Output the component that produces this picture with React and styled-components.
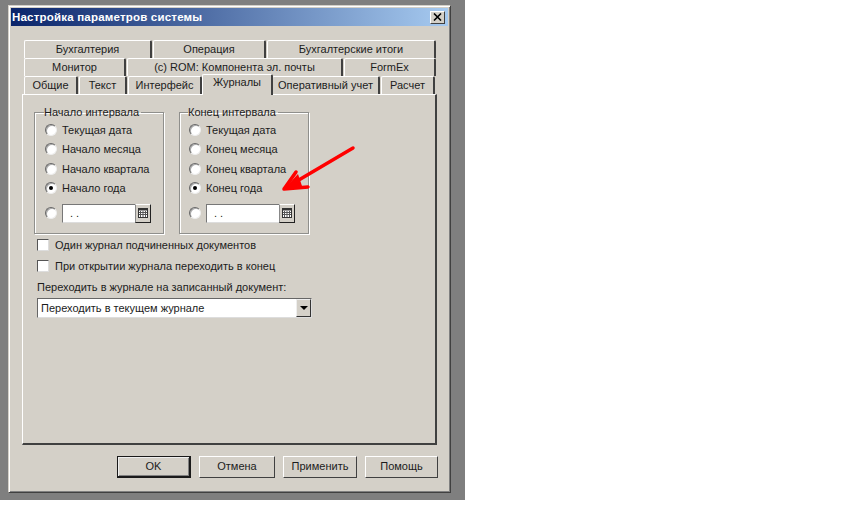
import React from "react";
import styled, { createGlobalStyle, css } from "styled-components";

const Global = createGlobalStyle`
  html, body { margin: 0; padding: 0; background: #fff; }
  body { font-family: "Liberation Sans", Arial, sans-serif; font-size: 11px; color: #1c1c1c; }
`;
const Backdrop = styled.div`
  position: relative; width: 465px; height: 500px; background: #7f7f7f;
  padding: 5px 14px 7px 8px; box-sizing: border-box;
`;
const Dialog = styled.div`
  width: 443px; height: 488px; box-sizing: border-box; background: #d4d0c8;
  border: 1px solid #404040; border-top-color: #d4d0c8; border-left-color: #d4d0c8;
  box-shadow: inset 1px 1px 0 #fff, inset -1px -1px 0 #808080;
  padding: 2px 2px 2px 2px; display: flex; flex-direction: column;
`;
const TitleBar = styled.div`
  height: 18px; flex: none; display: flex; align-items: center; justify-content: space-between;
  padding: 0 3px 0 1px; background: linear-gradient(90deg, #0a246a, #a6caf0);
`;
const Title = styled.div`
  color: #fff; font-weight: 700; font-size: 11.5px; letter-spacing: 0.2px;
`;
const CloseButton = styled.div`
  width: 15px; height: 13px; background: #d4d0c8; box-sizing: border-box;
  border: 1px solid; border-color: #fff #404040 #404040 #fff;
  display: flex; align-items: center; justify-content: center;
`;
const Tabs = styled.div`
  margin: 14px 0 0 11px; width: 415px; display: flex; flex-direction: column;
`;
const TabRow = styled.div`
  display: flex; height: 18px; padding-left: 2px; gap: 1px; align-items: flex-end;
  position: relative; z-index: ${p => p.$z || 0};
`;
const Tab = styled.div`
  box-sizing: border-box; height: 18px; width: ${p => p.$w}px; flex: none; background: #d4d0c8; text-align: center;
  border-top: 1px solid #fff; border-left: 1px solid #fff;
  border-right: 2px solid #404040; border-top-left-radius: 2px; border-top-right-radius: 2px;
  line-height: 16px; font-size: 11px; white-space: nowrap;
  ${p => p.$active && css`
    height: 21px; margin-left: -1px; margin-right: -2px; margin-bottom: -1px;
    line-height: 15px; position: relative; z-index: 2; padding-bottom: 3px;
  `}
`;
const Panel = styled.div`
  box-sizing: border-box; height: 351px; width: 415px; border: 1px solid #fff;
  border-right: 2px solid #404040; border-bottom: 2px solid #404040;
  padding: 12px 0 0 11px; position: relative;
`;
const Groups = styled.div`display: flex; gap: 15px;`;
const Group = styled.fieldset`
  margin: 0; box-sizing: border-box; width: 130px; height: 127px; padding: 3px 0 0 ${p => p.$pad}px;
  border: 1px solid #8f8f8c; box-shadow: 1px 1px 0 #fff, inset 1px 1px 0 #fff;
  display: flex; flex-direction: column; min-width: 0;
`;
const Legend = styled.legend`
  padding: 0 2px 0 0; margin-left: ${p => p.$offset}px; font-size: 11px; line-height: 10px;
`;
const RadioRow = styled.div`
  display: flex; align-items: center; height: 19.5px; gap: 5px; white-space: nowrap;
`;
const DateRow = styled.div`
  display: flex; align-items: center; height: 22px; margin-top: 4px; gap: 5px;
`;
const RadioDot = styled.span`
  width: 12px; height: 12px; flex: none; border-radius: 50%; box-sizing: border-box; background: #fff;
  border: 1px solid #666; border-right-color: #eee; border-bottom-color: #eee;
  box-shadow: inset 1px 1px 0 #aaa;
  display: flex; align-items: center; justify-content: center;
  &::after { content: ""; width: 4px; height: 4px; border-radius: 50%; background: ${p => (p.$on ? "#000" : "transparent")}; }
`;
const DateField = styled.div`
  width: 73px; height: 19px; box-sizing: border-box; background: #fff; border: 1px solid #777;
  border-right: 0; border-bottom-color: #ddd; padding-left: 7px; line-height: 16px; letter-spacing: 3px;
`;
const CalButton = styled.div`
  width: 16px; height: 19px; box-sizing: border-box; background: #d4d0c8; margin-left: -5px;
  border: 1px solid; border-color: #fff #222 #222 #888;
  display: flex; align-items: center; justify-content: center;
`;
const CheckRow = styled.div`
  display: flex; align-items: center; height: 21px; gap: 6px;
`;
const CheckBox = styled.span`
  width: 12px; height: 12px; box-sizing: border-box; background: #fff; flex: none; margin-left: 3px;
  border: 1px solid #555; border-right-color: #ddd; border-bottom-color: #ddd;
`;
const Checks = styled.div`margin-top: 0;`;
const ComboLabel = styled.div`margin: 4px 0 0 3px; height: 18px; line-height: 14px;`;
const Combo = styled.div`
  margin: 0 0 0 3px; width: 275px; height: 20px; box-sizing: border-box; background: #fff; display: flex;
  justify-content: space-between; border: 1px solid #666; border-right-color: #ddd; border-bottom-color: #ddd;
  padding-left: 3px; line-height: 18px;
`;
const ComboArrow = styled.div`
  width: 15px; background: #d4d0c8; box-sizing: border-box; border: 1px solid; border-color: #eee #333 #333 #eee;
  display: flex; align-items: center; justify-content: center;
  &::after { content: ""; border: 4px solid transparent; border-top: 4px solid #000; border-bottom: 0; }
`;
const Footer = styled.div`
  display: flex; gap: 8px; justify-content: flex-end; width: 416px; margin: 11px 0 0 11px;
`;
const Button = styled.div`
  height: 22px; box-sizing: border-box; width: ${p => p.$w}px; background: #d4d0c8; text-align: center;
  line-height: 18px;
  border: 1px solid; border-color: #fff #404040 #404040 #fff;
  ${p => p.$def && css`border: 2px solid #1a1a1a; border-top-width: 1px; border-left-width: 1px; box-shadow: inset 1px 1px 0 #eee, inset -1px -1px 0 #808080;`}
`;
const Arrow = styled.svg`position: absolute; left: 275px; top: 140px;`;

const Cal = () => (
  <svg width="10" height="10" viewBox="0 0 10 10">
    <rect x="0.5" y="0.5" width="9" height="9" fill="#fff" stroke="#333" />
    <rect x="0" y="0" width="10" height="2.5" fill="#333" />
    <path d="M2.5 3v6M5 3v6M7.5 3v6M1 4.5h8M1 6.5h8" stroke="#555" strokeWidth="1" />
  </svg>
);

const IntervalGroup = ({ title, items, pad, offset, selected }) => (
  <Group $pad={pad}>
    <Legend $offset={offset}>{title}</Legend>
    {items.map((t, i) => (
      <RadioRow key={t}>
        <RadioDot $on={i === selected} />
        {t}
      </RadioRow>
    ))}
    <DateRow>
      <RadioDot />
      <DateField>..</DateField>
      <CalButton><Cal /></CalButton>
    </DateRow>
  </Group>
);

export default function App() {
  return (
    <>
      <Global />
      <Backdrop>
        <Dialog>
          <TitleBar>
            <Title>Настройка параметров системы</Title>
            <CloseButton>
              <svg width="9" height="8" viewBox="0 0 9 8"><path d="M1 0.5l7 7M8 0.5l-7 7" stroke="#000" strokeWidth="1.6" /></svg>
            </CloseButton>
          </TitleBar>
          <Tabs>
            <TabRow>
              <Tab $w={128}>Бухгалтерия</Tab>
              <Tab $w={113}>Операция</Tab>
              <Tab $w={169}>Бухгалтерские итоги</Tab>
            </TabRow>
            <TabRow>
              <Tab $w={102}>Монитор</Tab>
              <Tab $w={216}>(c) ROM: Компонента эл. почты</Tab>
              <Tab $w={92}>FormEx</Tab>
            </TabRow>
            <TabRow $z={2}>
              <Tab $w={54}>Общие</Tab>
              <Tab $w={48}>Текст</Tab>
              <Tab $w={74}>Интерфейс</Tab>
              <Tab $active $w={71}>Журналы</Tab>
              <Tab $w={108}>Оперативный учет</Tab>
              <Tab $w={54}>Расчет</Tab>
            </TabRow>
            <Panel>
              <Groups>
                <IntervalGroup title="Начало интервала" pad={10} offset={-1} selected={3}
                  items={["Текущая дата", "Начало месяца", "Начало квартала", "Начало года"]} />
                <IntervalGroup title="Конец интервала" pad={9} offset={-1} selected={3}
                  items={["Текущая дата", "Конец месяца", "Конец квартала", "Конец года"]} />
              </Groups>
              <Checks>
                <CheckRow><CheckBox />Один журнал подчиненных документов</CheckRow>
                <CheckRow><CheckBox />При открытии журнала переходить в конец</CheckRow>
              </Checks>
              <ComboLabel>Переходить в журнале на записанный документ:</ComboLabel>
              <Combo>Переходить в текущем журнале<ComboArrow /></Combo>
            </Panel>
          </Tabs>
          <Footer>
            <Button $def $w={74}>OK</Button>
            <Button $w={76}>Отмена</Button>
            <Button $w={74}>Применить</Button>
            <Button $w={73}>Помощь</Button>
          </Footer>
        </Dialog>
        <Arrow width="90" height="60" viewBox="275 140 90 60">
          <path d="M353 148 L292 184 M284 189 L296 172 M284 189 L308 187" stroke="#f00" strokeWidth="3.5" strokeLinecap="round" fill="none" />
          <path d="M283 190 L298 174 L302 186 Z" fill="#f00" />
        </Arrow>
      </Backdrop>
    </>
  );
}
